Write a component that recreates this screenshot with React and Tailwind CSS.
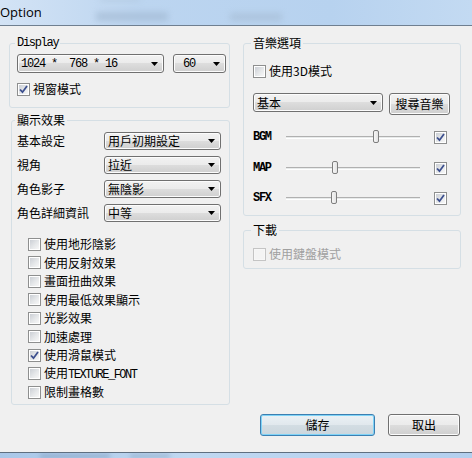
import React from "react";

const cjk = "font-['Noto_Sans_CJK_TC','Noto_Sans_CJK_SC',sans-serif] text-[12px]";
const mono = "font-['Liberation_Mono',monospace] text-[12px] tracking-[-1.2px]";

function Check({ checked, disabled }) {
  return (
    <span
      className={
        "w-[13px] h-[13px] shrink-0 border p-[1px] flex " +
        (disabled ? "border-[#c4c4c4] bg-[#f7f7f7]" : "border-[#8e8f8f] bg-white")
      }
    >
      <span
        className={
          "flex-1 flex items-center justify-center " +
          (disabled
            ? "bg-[#f4f4f4]"
            : "bg-[linear-gradient(135deg,#cbcfd5,#e6e8ea_55%,#f7f7f7)]")
        }
      >
        {checked && (
          <svg width="9" height="9" viewBox="0 0 9 9">
            <path d="M1 4.5 L3.5 7.2 L8 1" fill="none" stroke="#3c4f8e" strokeWidth="1.8" />
          </svg>
        )}
      </span>
    </span>
  );
}

function Arrow() {
  return (
    <svg width="7" height="4" viewBox="0 0 7 4" className="shrink-0">
      <path d="M0 0H7L3.5 4Z" fill="#000" />
    </svg>
  );
}

function Select({ children, className = "", textClass = cjk }) {
  return (
    <div
      className={
        "border border-[#707070] rounded-[3px] bg-[linear-gradient(#f2f2f2,#ebebeb_50%,#dddddd_50%,#cfcfcf)] shadow-[inset_0_0_0_1px_#fcfcfc] flex items-center pl-[3px] pr-[5px] text-black " +
        className
      }
    >
      <span className={"flex-1 whitespace-nowrap leading-[16px] " + textClass}>{children}</span>
      <Arrow />
    </div>
  );
}

function Group({ title, titleClass = cjk, className = "", children }) {
  return (
    <fieldset className={"border border-[#d5dfe5] rounded-[3px] " + className}>
      <legend className={"px-[2px] -ml-[2px] leading-[14px] text-black " + titleClass}>{title}</legend>
      {children}
    </fieldset>
  );
}

function CheckRow({ checked, disabled, children, className = "" }) {
  return (
    <div className={"flex items-center gap-[3px] " + className}>
      <Check checked={checked} disabled={disabled} />
      <span className={cjk + " leading-[16px] whitespace-nowrap " + (disabled ? "text-[#a0a0a0]" : "text-black")}>{children}</span>
    </div>
  );
}

function SliderRow({ label, pos, className = "" }) {
  return (
    <div className={"h-[20px] flex items-center " + className}>
      <span className="w-[33px] font-['Liberation_Mono',monospace] text-[12px] font-bold tracking-[-1.3px] text-black">{label}</span>
      <div className="relative w-[134px] h-[20px] flex items-center">
        <div className="w-full h-[3px] border-t border-[#b0b0b0] border-b border-b-white bg-[#e7eaea]" />
        <span
          className="absolute top-[3px] w-[6px] h-[13px] rounded-[2px] border border-[#7e7e7e] bg-[linear-gradient(90deg,#f6f6f6,#e4e4e4)]"
          style={{ left: pos }}
        />
      </div>
      <span className="ml-[14px]">
        <Check checked />
      </span>
    </div>
  );
}

function Button({ children, focused, className = "" }) {
  return (
    <button
      className={
        "h-[22px] rounded-[3px] border text-black " +
        cjk +
        " " +
        (focused
          ? "border-[#3c7fb1] bg-[linear-gradient(#eaf1f5,#e1e8ed_50%,#d3dde3_50%,#cbd6dd)] shadow-[inset_0_0_0_1px_#7fd3f7]"
          : "border-[#707070] bg-[linear-gradient(#f2f2f2,#ebebeb_50%,#dddddd_50%,#cfcfcf)] shadow-[inset_0_0_0_1px_#fcfcfc]") +
        " " +
        className
      }
    >
      {children}
    </button>
  );
}

export default function App() {
  const effects = [
    ["使用地形陰影", false],
    ["使用反射效果", false],
    ["畫面扭曲效果", false],
    ["使用最低效果顯示", false],
    ["光影效果", false],
    ["加速處理", false],
    ["使用滑鼠模式", true],
    ["TEXTURE", false],
    ["限制畫格數", false],
  ];

  const rows = [
    ["基本設定", "用戶初期設定"],
    ["視角", "拉近"],
    ["角色影子", "無陰影"],
    ["角色詳細資訊", "中等"],
  ];

  return (
    <div className="w-[472px] h-[458px] bg-[#f0f0f0] flex flex-col overflow-hidden">
      {/* title bar */}
      <div className="relative h-[26px] shrink-0 border-b border-[#6f7f90] bg-[linear-gradient(90deg,#d3e3f5,#bcd5f0_30%,#b7d2ef_70%,#c3daf2)] overflow-hidden">
        <span className="absolute left-[96px] top-[12px] w-[72px] h-[9px] bg-[#9fb6cf] blur-[3px] opacity-60" />
        <span className="absolute left-[230px] top-[13px] w-[52px] h-[8px] bg-[#a5bbd2] blur-[3px] opacity-60" />
        <span className="absolute left-[100px] top-[-4px] w-[40px] h-[6px] bg-[#aec4da] blur-[3px] opacity-50" />
        <span className="relative block leading-[25px] text-[13px] text-black font-['Open_Sans',sans-serif]">Option</span>
      </div>

      <div className="flex pt-[10px] pl-[9px]">
        {/* left column */}
        <div className="w-[221px] flex flex-col">
          <Group title="Display" titleClass={mono + " tracking-[-1.3px]"} className="w-[220px] pl-[7px] pr-[3px] pb-[11px]">
            <div className="flex gap-[9px] mt-[4px]">
              <Select className="w-[147px] h-[19px]" textClass={mono + " whitespace-pre"}>{"1024 *  768 * 16"}</Select>
              <Select className="w-[53px] h-[19px]" textClass={mono + " pl-[6px]"}>60</Select>
            </div>
            <CheckRow checked className="mt-[9px] h-[14px]">視窗模式</CheckRow>
          </Group>

          <Group title="顯示效果" className="ml-[2px] mt-[5px] w-[219px] pl-[5px] pb-[2.5px]">
            <div className="flex flex-col gap-[6px] mt-[5px]">
              {rows.map(([label, value]) => (
                <div key={label} className="flex items-center h-[18px]">
                  <span className={cjk + " w-[87px] text-black leading-[16px] whitespace-nowrap"}>{label}</span>
                  <Select className="w-[117px] h-[18px]">{value}</Select>
                </div>
              ))}
            </div>
            <div className="mt-[13px] pl-[11px]">
              {effects.map(([label, on]) => (
                <div key={label} className="h-[18.5px] flex items-center">
                  {label === "TEXTURE" ? (
                    <div className="flex items-center gap-[3px]">
                      <Check />
                      <span className={cjk + " leading-[16px] text-black whitespace-nowrap"}>
                        使用<span className={mono + " tracking-[-1.5px]"}>TEXTURE_FONT</span>
                      </span>
                    </div>
                  ) : (
                    <CheckRow checked={on}>{label}</CheckRow>
                  )}
                </div>
              ))}
            </div>
          </Group>
        </div>

        {/* right column */}
        <div className="ml-[13px] w-[218px] flex flex-col">
          <Group title="音樂選項" className="pl-[9px] pb-[7px]">
            <CheckRow className="mt-[14px] h-[14px]">使用3D模式</CheckRow>
            <div className="flex gap-[6px] mt-[15px]">
              <Select className="w-[130px] h-[19px]">基本</Select>
              <Button className="w-[61px] h-[19px] leading-none">搜尋音樂</Button>
            </div>
            <SliderRow label="BGM" pos={87} className="mt-[12px]" />
            <SliderRow label="MAP" pos={46} className="mt-[11px]" />
            <SliderRow label="SFX" pos={45} className="mt-[10px]" />
          </Group>

          <Group title="下載" className="mt-[7px] pl-[9px] pb-[7px]">
            <CheckRow disabled className="mt-[10px] h-[14px]">使用鍵盤模式</CheckRow>
          </Group>
        </div>
      </div>

      <div className="flex justify-end gap-[13px] pr-[12px] mt-[9px]">
        <Button focused className="w-[115px]">儲存</Button>
        <Button className="w-[72px]">取出</Button>
      </div>

      <div className="flex-1" />

      {/* bottom window edge */}
      <div className="relative h-[6px] shrink-0 border-t border-[#5f6f80] bg-[linear-gradient(90deg,#a9c7e8,#c0d8f1_40%,#b3cfee)] overflow-hidden">
        <span className="absolute left-[40px] top-[1px] w-[70px] h-[4px] bg-[#7f9bbb] blur-[2px] opacity-60" />
        <span className="absolute left-[130px] top-[1px] w-[40px] h-[4px] bg-[#8aa6c4] blur-[2px] opacity-60" />
      </div>
    </div>
  );
}
